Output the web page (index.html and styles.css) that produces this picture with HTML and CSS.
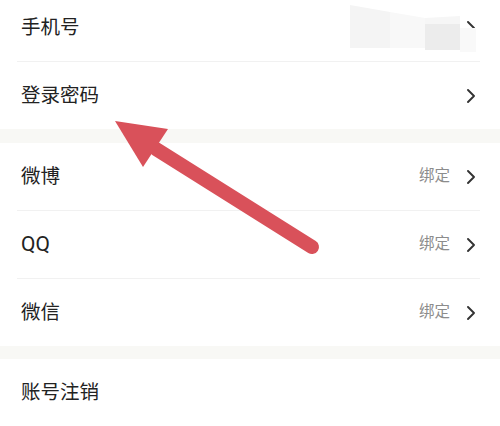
FILE: index.html
```html
<!DOCTYPE html>
<html lang="zh-CN">
<head>
<meta charset="utf-8">
<link rel="stylesheet" href="styles.css">
</head>
<body>
<div class="page">
  <div class="group">
    <div class="row first">
      <span class="label">手机号</span>
      <span class="right"><svg class="chev" viewBox="0 0 8 14"><path d="M1 1 L7 7 L1 13"/></svg></span>
    </div>
    <div class="divider"></div>
    <div class="row">
      <span class="label">登录密码</span>
      <span class="right"><svg class="chev" viewBox="0 0 8 14"><path d="M1 1 L7 7 L1 13"/></svg></span>
    </div>
  </div>
  <div class="band"></div>
  <div class="group">
    <div class="row">
      <span class="label">微博</span>
      <span class="right"><span class="status">绑定</span><svg class="chev" viewBox="0 0 8 14"><path d="M1 1 L7 7 L1 13"/></svg></span>
    </div>
    <div class="divider"></div>
    <div class="row">
      <span class="label latin">QQ</span>
      <span class="right"><span class="status">绑定</span><svg class="chev" viewBox="0 0 8 14"><path d="M1 1 L7 7 L1 13"/></svg></span>
    </div>
    <div class="divider"></div>
    <div class="row">
      <span class="label">微信</span>
      <span class="right"><span class="status">绑定</span><svg class="chev" viewBox="0 0 8 14"><path d="M1 1 L7 7 L1 13"/></svg></span>
    </div>
  </div>
  <div class="band band2"></div>
  <div class="group">
    <div class="row last">
      <span class="label">账号注销</span>
    </div>
  </div>

  <svg class="redact" viewBox="0 0 140 60" width="140" height="60">
    <polygon points="10,5 50,12 50,48 10,48" fill="#f4f4f4"/>
    <polygon points="50,12 85,18 85,48 50,48" fill="#f8f8f8"/>
    <rect x="85" y="24" width="35" height="26" fill="#ececec"/>
    <polygon points="85,18 120,16 120,24 85,24" fill="#f6f6f6"/>
    <rect x="120" y="28" width="16" height="24" fill="#f9f9f9"/>
  </svg>

  <svg class="arrow" viewBox="0 0 500 426" width="500" height="426">
    <line x1="156" y1="149" x2="312" y2="247" stroke="#d9515a" stroke-width="14" stroke-linecap="round"/>
    <polygon points="115,121 168,129 143,167" fill="#d9515a"/>
  </svg>
</div>
</body>
</html>
```

FILE: styles.css
```css
html, body {
  margin: 0;
  padding: 0;
  background: #ffffff;
}

.page {
  position: relative;
  width: 500px;
  height: 426px;
  overflow: hidden;
  font-family: Roboto, "Noto Sans CJK SC", sans-serif;
}

.group {
  background: #ffffff;
}

.row {
  height: 67px;
  display: flex;
  align-items: center;
  justify-content: space-between;
  padding: 0 25px 0 21px;
  box-sizing: border-box;
}

.row.first {
  height: 61px;
  padding-bottom: 6px;
}

.row.last {
  height: 68px;
}

.label {
  font-size: 19.5px;
  color: #222222;
  line-height: 1;
}

.label.latin {
  font-size: 21px;
}

.right {
  display: flex;
  align-items: center;
  gap: 17px;
}

.status {
  font-size: 15.5px;
  color: #8c8c8c;
  line-height: 1;
}

.chev {
  width: 8px;
  height: 14px;
  display: block;
}

.chev path {
  fill: none;
  stroke: #333333;
  stroke-width: 1.9;
  stroke-linecap: round;
  stroke-linejoin: round;
}

.divider {
  height: 1px;
  background: #f1f1f1;
  margin: 0 20px 0 17px;
}

.band {
  height: 14px;
  background: #f8f8f5;
}

.band2 {
  height: 13px;
}

.redact {
  position: absolute;
  left: 340px;
  top: 0;
}

.arrow {
  position: absolute;
  left: 0;
  top: 0;
}
```
